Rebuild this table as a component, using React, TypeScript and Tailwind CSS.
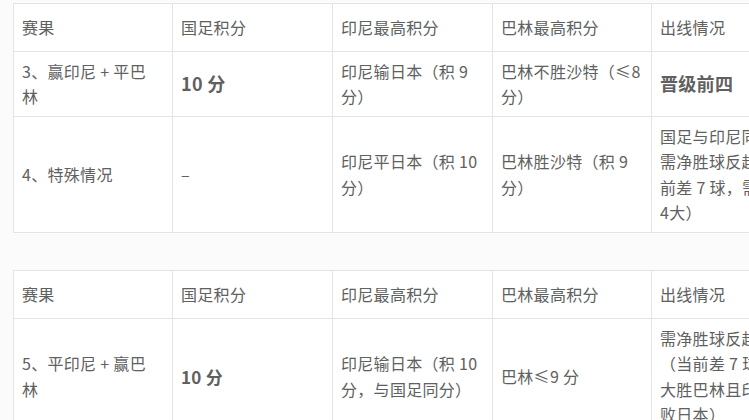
import React from "react";

const font = { fontFamily: '"Noto Sans CJK SC", "Noto Sans", sans-serif' };

function Cell({ children, className = "" }: { children: React.ReactNode; className?: string }) {
  return (
    <td className={`border border-[#e4e4e4] px-2 py-[4px] align-middle text-[16px] leading-[25.5px] text-[#606060] tracking-[0.3px] ${className}`}>
      {children}
    </td>
  );
}

function Header() {
  return (
    <tr className="h-[48px]">
      <Cell>赛果</Cell>
      <Cell>国足积分</Cell>
      <Cell>印尼最高积分</Cell>
      <Cell>巴林最高积分</Cell>
      <Cell>出线情况</Cell>
    </tr>
  );
}

function Cols() {
  return (
    <colgroup>
      <col className="w-[159px]" />
      <col className="w-[160px]" />
      <col className="w-[160px]" />
      <col className="w-[159px]" />
      <col className="w-[170px]" />
    </colgroup>
  );
}

export default function App() {
  return (
    <div className="w-[749px] h-[420px] overflow-hidden bg-[#fbfbfb]" style={font}>
      <div className="pl-[13px] pt-[3px]">
        <table className="table-fixed border-collapse bg-white w-[808px]">
          <Cols />
          <tbody>
            <Header />
            <tr className="h-[65px]">
              <Cell>3、赢印尼 + 平巴<br />林</Cell>
              <Cell className="text-[18px] font-semibold text-[#222]">10 分</Cell>
              <Cell>印尼输日本（积 9<br />分）</Cell>
              <Cell>巴林不胜沙特（≤8<br />分）</Cell>
              <Cell className="text-[18px] font-bold text-[#222]">晋级前四</Cell>
            </tr>
            <tr className="h-[116px]">
              <Cell>4、特殊情况</Cell>
              <Cell>–</Cell>
              <Cell>印尼平日本（积 10<br />分）</Cell>
              <Cell>巴林胜沙特（积 9<br />分）</Cell>
              <Cell>
                <span className="whitespace-nowrap">国足与印尼同分，</span><br />
                <span className="whitespace-nowrap">需净胜球反超（当</span><br />
                <span className="whitespace-nowrap">前差 7 球，需净胜</span><br />
                4大）
              </Cell>
            </tr>
          </tbody>
        </table>
        <div className="h-[37px]" />
        <table className="table-fixed border-collapse bg-white w-[808px]">
          <Cols />
          <tbody>
            <Header />
            <tr className="h-[116px]">
              <Cell>5、平印尼 + 赢巴<br />林</Cell>
              <Cell className="text-[17px] font-semibold text-[#222]">10 分</Cell>
              <Cell>印尼输日本（积 10<br />分，与国足同分）</Cell>
              <Cell>巴林≤9 分</Cell>
              <Cell>
                <span className="whitespace-nowrap">需净胜球反超</span><br />
                <span className="whitespace-nowrap">（当前差 7 球，</span><br />
                <span className="whitespace-nowrap">大胜巴林且印尼</span><br />
                败日本）
              </Cell>
            </tr>
          </tbody>
        </table>
      </div>
    </div>
  );
}
